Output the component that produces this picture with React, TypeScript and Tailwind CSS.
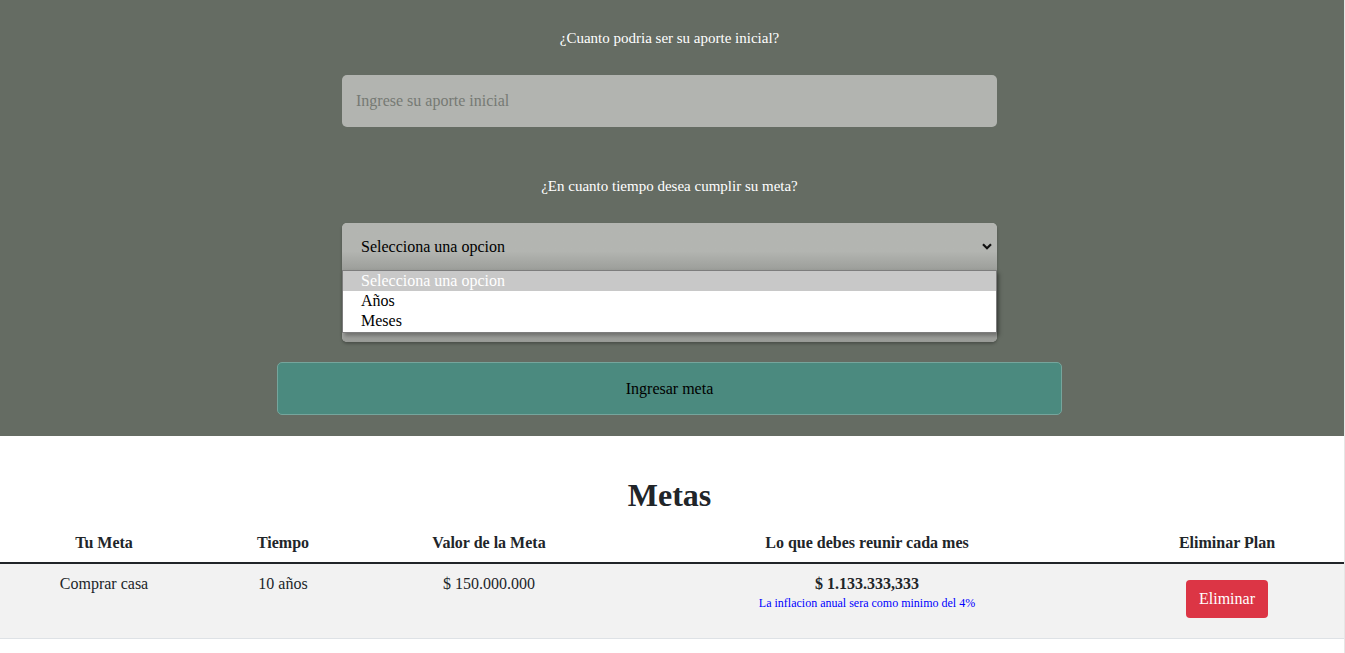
import React from "react";

const serif = { fontFamily: '"Liberation Serif", "Times New Roman", serif' };

function Chevron() {
  return (
    <svg width="10" height="7" viewBox="0 0 10 7" className="shrink-0">
      <path d="M1 1.2 L5 5.2 L9 1.2" fill="none" stroke="#111" strokeWidth="2.2" />
    </svg>
  );
}

export default function App() {
  return (
    <div className="flex min-h-[653px] w-[1345px] bg-white text-[#212529]" style={serif}>
      <div className="w-[1344px]">
        {/* Form section */}
        <section className="bg-[#656c63] pt-[28px] pb-[21px] pr-[5px]">
          <div className="flex flex-col items-center">
            <p className="text-[15px] leading-[20px] text-white">¿Cuanto podria ser su aporte inicial?</p>
            <input
              className="mt-[27px] h-[52px] w-[655px] rounded-[5px] bg-[#b2b4b0] pl-[14px] text-[16px] text-black outline-none placeholder:text-[#767a74]"
              placeholder="Ingrese su aporte inicial"
              style={serif}
            />
            <p className="mt-[49px] text-[15px] leading-[20px] text-white">¿En cuanto tiempo desea cumplir su meta?</p>
            <div className="relative mt-[27px] h-[119px] w-[655px] rounded-[5px] bg-[#b2b4b0] shadow-[0_2px_3px_rgba(0,0,0,0.25)]">
              <div className="flex h-[47px] items-center justify-between rounded-t-[5px] bg-gradient-to-b from-[#b3b5b1] from-60% to-[#9c9e9a] pl-[19px] pr-[5px] text-[16px] text-black">
                <span>Selecciona una opcion</span>
                <Chevron />
              </div>
              <div className="h-[62px] bg-[#b2b4b0]" />
              <div className="h-[10px] rounded-b-[5px] bg-gradient-to-b from-[#aeb0ac] to-[#979995]" />
              <div className="absolute left-0 top-[47px] w-[655px] border border-[#7d7d7d] bg-white pb-px text-[16px] leading-[20px] text-black shadow-[2px_3px_4px_rgba(0,0,0,0.35)]">
                <div className="bg-[#c8c8c8] pl-[18px] text-white">Selecciona una opcion</div>
                <div className="pl-[18px]">Años</div>
                <div className="pl-[18px]">Meses</div>
              </div>
            </div>
            <button
              className="mt-[20px] h-[53px] w-[785px] rounded-[5px] border border-[#75a59c] bg-[#4b8a7f] text-[16px] text-black"
              style={serif}
            >
              Ingresar meta
            </button>
          </div>
        </section>

        {/* Metas */}
        <section>
          <h1 className="mt-[40px] pr-[5px] text-center text-[32px] font-bold leading-[38px] text-[#212529]">Metas</h1>
          <div className="mt-[10px]">
            <div className="flex h-[40px] items-center border-b-2 border-[#212529] text-[16px] font-bold">
              <div className="w-[208px] text-center">Tu Meta</div>
              <div className="w-[150px] text-center">Tiempo</div>
              <div className="w-[262px] text-center">Valor de la Meta</div>
              <div className="w-[494px] text-center">Lo que debes reunir cada mes</div>
              <div className="w-[226px] text-center">Eliminar Plan</div>
            </div>
            <div className="flex h-[75px] border-b border-[#dee2e6] bg-[#f2f2f2] text-[16px] leading-[24px]">
              <div className="w-[208px] pt-[8px] text-center">Comprar casa</div>
              <div className="w-[150px] pt-[8px] text-center">10 años</div>
              <div className="w-[262px] pt-[8px] text-center">$ 150.000.000</div>
              <div className="w-[494px] pt-[8px] text-center">
                <div className="font-bold">$ 1.133.333,333</div>
                <div className="text-[12px] leading-[14px] text-[#0000ff]">
                  La inflacion anual sera como minimo del 4%
                </div>
              </div>
              <div className="flex w-[226px] justify-center pt-[16px]">
                <button
                  className="h-[38px] w-[82px] rounded-[4px] bg-[#dc3545] text-[16px] text-white"
                  style={serif}
                >
                  Eliminar
                </button>
              </div>
            </div>
          </div>
        </section>
      </div>
      <div className="w-px bg-[#e6e6e6]" />
    </div>
  );
}
